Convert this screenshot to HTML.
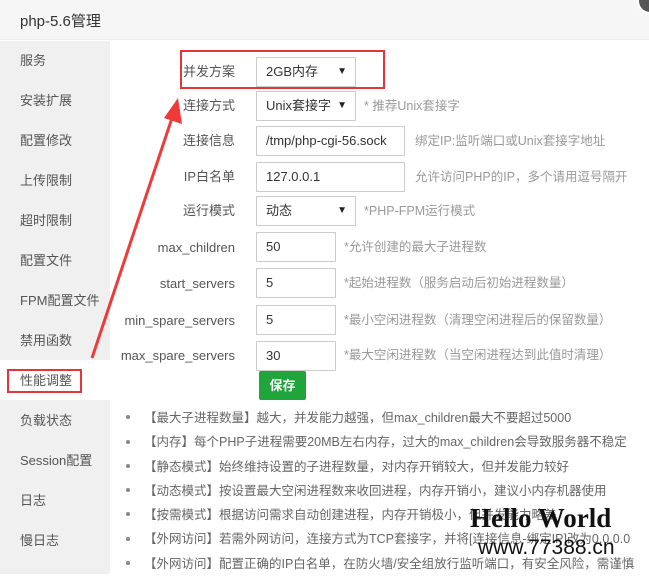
<!DOCTYPE html>
<html><head><meta charset="utf-8"><style>
*{margin:0;padding:0;box-sizing:border-box}
body{width:649px;height:574px;overflow:hidden;background:#fff;font-family:"Liberation Sans","Noto Sans CJK SC",sans-serif;position:relative;color:#555}
.hd{position:absolute;left:0;top:0;width:649px;height:40px;background:#f6f6f6;border-bottom:1px solid #eee}
.hd span{position:absolute;left:20px;top:10px;font-size:15px;color:#333}
.close{position:absolute;left:637px;top:-12px;width:26px;height:26px;border-radius:50%;background:#555;border:2px solid #fff}
.sb{position:absolute;left:0;top:41px;width:110px;height:533px;background:#f0f0f0}
.it{position:absolute;left:20px;font-size:13px;color:#555;line-height:16px}
.sel{position:absolute;left:0;top:360px;width:110px;height:40px;background:#fff}
.lb{position:absolute;width:235px;left:0;text-align:right;font-size:13px;color:#555;line-height:16px}
.in{position:absolute;left:256px;height:30px;border:1px solid #ccc;font-size:13px;color:#333;padding-left:9px;line-height:28px;background:#fff}
.in b{position:absolute;right:8px;top:0;font-weight:normal;font-size:10px;color:#222}
.hint{position:absolute;font-size:12.5px;color:#999;line-height:16px}
.btn{position:absolute;left:259px;top:371px;width:47px;height:29px;background:#20a53a;border-radius:2px;color:#fff;font-size:13px;text-align:center;line-height:29px;font-weight:bold}
ul{position:absolute;left:122px;top:409px;list-style:none}
li{font-size:12.5px;color:#666;height:24.3px;line-height:18px;white-space:nowrap}
li:before{content:"";display:inline-block;width:4px;height:4px;border-radius:50%;background:#888;margin:0 14px 3px 4px;vertical-align:middle}
.wm1{position:absolute;left:470px;top:503px;font-family:"Liberation Serif",serif;font-weight:bold;font-size:27px;color:#111;letter-spacing:0px}
.wm2{position:absolute;left:478px;top:536px;font-size:21px;color:#111}
</style></head><body>
<div class="hd"><span>php-5.6管理</span></div>
<div class="close"></div>
<div class="sb"></div>
<div class="sel"></div>
<div class="it" style="top:53px">服务</div>
<div class="it" style="top:93px">安装扩展</div>
<div class="it" style="top:133px">配置修改</div>
<div class="it" style="top:173px">上传限制</div>
<div class="it" style="top:213px">超时限制</div>
<div class="it" style="top:253px">配置文件</div>
<div class="it" style="top:293px">FPM配置文件</div>
<div class="it" style="top:333px">禁用函数</div>
<div class="it" style="top:373px">性能调整</div>
<div class="it" style="top:413px">负载状态</div>
<div class="it" style="top:453px">Session配置</div>
<div class="it" style="top:493px">日志</div>
<div class="it" style="top:533px">慢日志</div>
<div style="position:absolute;left:7px;top:369px;width:75px;height:24px;border:2px solid #e8333a"></div>

<div class="lb" style="top:64px">并发方案</div>
<div class="in" style="top:57px;width:100px">2GB内存<b>▼</b></div>
<div class="lb" style="top:98px">连接方式</div>
<div class="in" style="top:91px;width:100px">Unix套接字<b>▼</b></div>
<div class="hint" style="left:364px;top:98px">* 推荐Unix套接字</div>
<div class="lb" style="top:133px">连接信息</div>
<div class="in" style="top:126px;width:149px">/tmp/php-cgi-56.sock</div>
<div class="hint" style="left:415px;top:133px">绑定IP:监听端口或Unix套接字地址</div>
<div class="lb" style="top:169px">IP白名单</div>
<div class="in" style="top:162px;width:149px">127.0.0.1</div>
<div class="hint" style="left:415px;top:169px">允许访问PHP的IP，多个请用逗号隔开</div>
<div class="lb" style="top:203px">运行模式</div>
<div class="in" style="top:196px;width:100px">动态<b>▼</b></div>
<div class="hint" style="left:364px;top:203px">*PHP-FPM运行模式</div>
<div class="lb" style="top:240px">max_children</div>
<div class="in" style="top:232px;width:80px">50</div>
<div class="hint" style="left:344px;top:239px">*允许创建的最大子进程数</div>
<div class="lb" style="top:276px">start_servers</div>
<div class="in" style="top:268px;width:80px">5</div>
<div class="hint" style="left:344px;top:275px">*起始进程数（服务启动后初始进程数量）</div>
<div class="lb" style="top:313px">min_spare_servers</div>
<div class="in" style="top:305px;width:80px">5</div>
<div class="hint" style="left:344px;top:312px">*最小空闲进程数（清理空闲进程后的保留数量）</div>
<div class="lb" style="top:348px">max_spare_servers</div>
<div class="in" style="top:341px;width:80px">30</div>
<div class="hint" style="left:344px;top:347px">*最大空闲进程数（当空闲进程达到此值时清理）</div>
<div class="btn">保存</div>
<div style="position:absolute;left:180px;top:50px;width:205px;height:39px;border:2px solid #e8333a"></div>
<svg style="position:absolute;left:0;top:0" width="649" height="574"><line x1="92" y1="358" x2="172" y2="118" stroke="#f03a3a" stroke-width="3"/><polygon points="178,98 164,118 182,124" fill="#f03a3a"/></svg>
<ul>
<li>【最大子进程数量】越大，并发能力越强，但max_children最大不要超过5000</li>
<li>【内存】每个PHP子进程需要20MB左右内存，过大的max_children会导致服务器不稳定</li>
<li>【静态模式】始终维持设置的子进程数量，对内存开销较大，但并发能力较好</li>
<li>【动态模式】按设置最大空闲进程数来收回进程，内存开销小，建议小内存机器使用</li>
<li>【按需模式】根据访问需求自动创建进程，内存开销极小，但并发能力略差</li>
<li>【外网访问】若需外网访问，连接方式为TCP套接字，并将[连接信息-绑定IP]改为0.0.0.0</li>
<li>【外网访问】配置正确的IP白名单，在防火墙/安全组放行监听端口，有安全风险，需谨慎</li>
</ul>
<div class="wm1">Hello World</div>
<div class="wm2">www.77388.cn</div>
</body></html>
